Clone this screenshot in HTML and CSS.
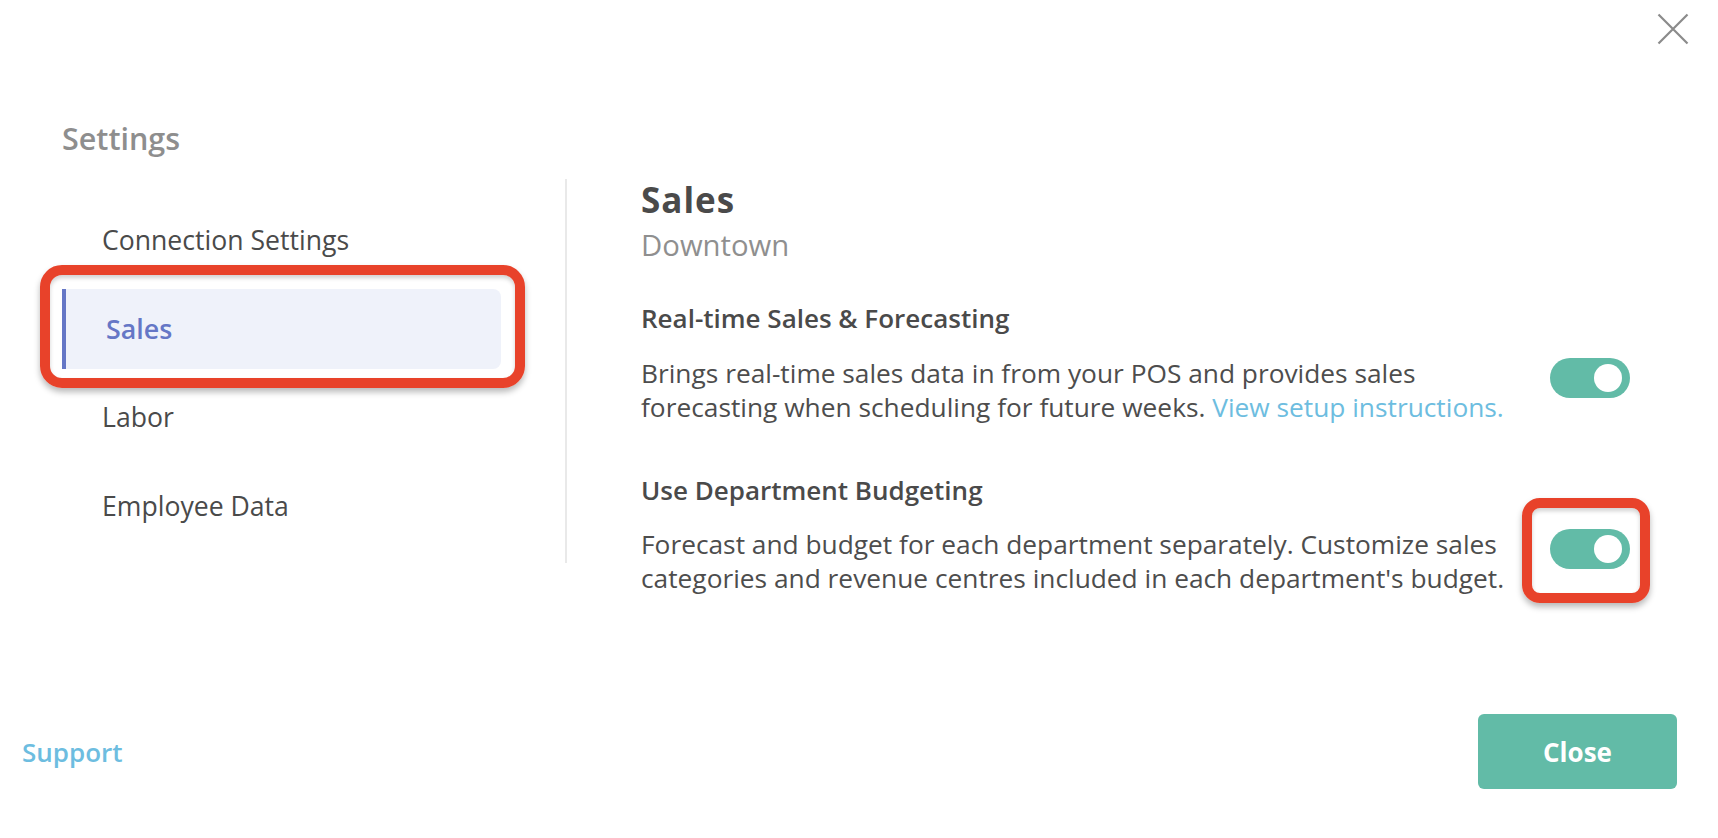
FILE: index.html
```html
<!DOCTYPE html>
<html lang="en">
<head>
<meta charset="utf-8">
<title>Settings</title>
<link rel="stylesheet" href="styles.css">
</head>
<body>
<div class="modal">
  <button class="close-x" aria-label="Close">
    <svg width="32" height="32" viewBox="0 0 32 32"><path d="M1.5 1.5 L30.5 30.5 M30.5 1.5 L1.5 30.5" stroke="#8b8b8b" stroke-width="2.2" fill="none"/></svg>
  </button>
  <h1 class="title">Settings</h1>
  <div class="body">
    <nav class="sidebar">
      <div class="nav-item">Connection Settings</div>
      <div class="nav-item active">Sales<span class="mark mark-nav"></span></div>
      <div class="nav-item">Labor</div>
      <div class="nav-item">Employee Data</div>
    </nav>
    <section class="content">
      <h2 class="heading">Sales</h2>
      <div class="subheading">Downtown</div>
      <div class="setting first">
        <h3 class="setting-title">Real-time Sales &amp; Forecasting</h3>
        <div class="setting-row">
          <p class="setting-text">Brings real-time sales data in from your POS and provides sales forecasting when scheduling for future weeks. <a class="link" href="#">View setup instructions.</a></p>
          <span class="toggle"><span class="knob"></span></span>
        </div>
      </div>
      <div class="setting second">
        <h3 class="setting-title">Use Department Budgeting</h3>
        <div class="setting-row">
          <p class="setting-text">Forecast and budget for each department separately. Customize sales categories and revenue centres included in each department's budget.</p>
          <span class="toggle"><span class="knob"></span><span class="mark mark-toggle"></span></span>
        </div>
      </div>
    </section>
  </div>
  <footer class="footer">
    <a class="support" href="#">Support</a>
    <button class="close-btn">Close</button>
  </footer>
</div>
</body>
</html>
```

FILE: styles.css
```css
* { box-sizing: border-box; }
html, body { margin: 0; padding: 0; background: #ffffff; }
body {
  font-family: "Open Sans", "Noto Sans", sans-serif;
  color: #4a4a4a;
}
.modal {
  position: relative;
  height: 100vh;
  display: flex;
  flex-direction: column;
  padding-left: 62px;
}
.close-x {
  position: absolute;
  top: 13px;
  right: 29px;
  width: 32px;
  height: 32px;
  padding: 0;
  border: 0;
  background: none;
  display: block;
}
.close-x svg { display: block; }
.title {
  margin: 120px 0 0 0;
  font-size: 30.5px;
  line-height: 36px;
  font-weight: 600;
  color: #8e8e8e;
}
.body {
  display: flex;
  align-items: flex-start;
  margin-top: 23px;
}
.sidebar {
  width: 505px;
  flex: none;
  padding: 21px 64px 17px 0;
  border-right: 2px solid #e9e9e9;
  display: flex;
  flex-direction: column;
  gap: 8.5px;
}
.nav-item {
  position: relative;
  height: 80px;
  display: flex;
  align-items: center;
  padding-left: 40px;
  font-size: 26.6px;
  color: #4a4a4a;
}
.nav-item.active {
  border-left: 4px solid #6577c6;
  background: #eff2fa;
  border-radius: 0 8px 8px 0;
  color: #6577c6;
  font-weight: 600;
  font-size: 26.8px;
}
.mark {
  position: absolute;
  border: 10px solid #e8422a;
  box-shadow: 0 4px 6px rgba(0,0,0,0.28), inset 0 3px 4px rgba(0,0,0,0.18);
  pointer-events: none;
}
.mark-nav {
  top: -24px;
  bottom: -19px;
  left: -26px;
  right: -24px;
  border-radius: 22px;
}
.content {
  flex: 1;
  padding: 0 88px 0 74px;
}
.heading {
  margin: 1px 0 0 0;
  font-size: 35px;
  line-height: 40px;
  font-weight: 700;
  letter-spacing: 1px;
  color: #4a4a4a;
}
.subheading {
  margin-top: 5px;
  font-size: 29.3px;
  line-height: 40px;
  color: #8f8f8f;
}
.setting.first { margin-top: 36px; }
.setting.second { margin-top: 49px; }
.setting-title {
  margin: 0;
  font-size: 26px;
  line-height: 34px;
  font-weight: 600;
  color: #4a4a4a;
}
.setting-row {
  display: flex;
  align-items: flex-start;
  margin-top: 21px;
}
.setting.second .setting-row { margin-top: 20px; }
.setting-text {
  flex: 1;
  margin: 0;
  font-size: 26.3px;
  line-height: 34px;
  color: #4d4d4d;
}
.link {
  color: #6dbde0;
  text-decoration: none;
}
.toggle {
  position: relative;
  flex: none;
  width: 80px;
  height: 40px;
  margin: 1.5px 0 0 25px;
  border-radius: 20px;
  background: #62bba7;
}
.knob {
  position: absolute;
  top: 6px;
  right: 8px;
  width: 28px;
  height: 28px;
  border-radius: 50%;
  background: #ffffff;
}
.mark-toggle {
  top: -31px;
  bottom: -34px;
  left: -28px;
  right: -20px;
  border-radius: 18px;
}
.footer {
  margin-top: auto;
  margin-left: -62px;
  padding: 0 41px 49px 22px;
  display: flex;
  justify-content: space-between;
  align-items: center;
}
.support {
  font-size: 26px;
  font-weight: 600;
  color: #6dbde0;
  text-decoration: none;
}
.close-btn {
  width: 199px;
  height: 75px;
  border: 0;
  border-radius: 6px;
  background: #62bba7;
  color: #ffffff;
  font-family: "Open Sans", "Noto Sans", sans-serif;
  font-size: 26px;
  font-weight: 700;
}
```
